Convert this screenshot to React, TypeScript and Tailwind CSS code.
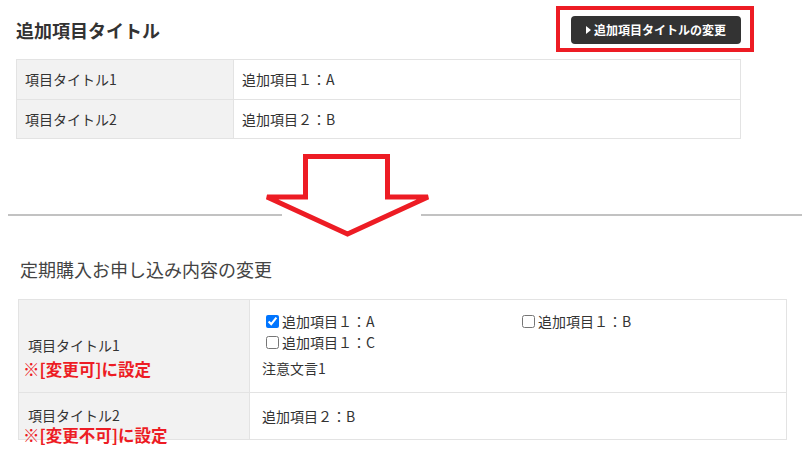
import React from 'react';

const font = { fontFamily: '"Noto Sans CJK JP", "Noto Sans", sans-serif' };

function Triangle() {
  return (
    <svg width="5" height="8" viewBox="0 0 5 8" className="mr-[3px]">
      <path d="M0 0 L5 4 L0 8 Z" fill="#fff" />
    </svg>
  );
}

function Arrow() {
  return (
    <svg
      className="absolute left-[255px] top-[150px]"
      width="185"
      height="95"
      viewBox="255 150 185 95"
    >
      <path
        d="M305.5 156.5 L387.5 156.5 L387.5 197 L428 197 L347.5 234 L267 197 L305.5 197 Z"
        fill="#fff"
        stroke="#ed1c24"
        strokeWidth="5"
        strokeLinejoin="miter"
      />
    </svg>
  );
}

function Check({ label, checked }: { label: string; checked?: boolean }) {
  return (
    <label className="flex items-center h-[21px]">
      <input
        type="checkbox"
        defaultChecked={checked}
        className="ml-1 mr-[3px] w-[13px] h-[13px]"
      />
      <span>{label}</span>
    </label>
  );
}

export default function App() {
  return (
    <div className="relative w-[812px] h-[460px] bg-white text-[#333] overflow-hidden" style={font}>
      {/* 追加項目タイトル */}
      <div className="px-4 pt-4 w-[757px]">
        <div className="flex items-center justify-between h-[28px]">
          <h2 className="text-[18px] font-bold leading-[28px]">追加項目タイトル</h2>
          <div className="relative">
            <button className="flex items-center h-[28px] w-[170px] justify-center bg-[#333] rounded-[4px] text-white text-[12px] font-bold">
              <Triangle />
              追加項目タイトルの変更
            </button>
            <span className="absolute -left-[15px] -right-[13px] -top-[10px] -bottom-[8px] border-4 border-[#ed1c24]" />
          </div>
        </div>

        <div className="mt-[15px] w-[725px] border border-[#e3e3e3] text-[14px]">
          <div className="flex h-[39px]">
            <div className="w-[217px] bg-[#f2f2f2] border-r border-[#e3e3e3] flex items-center pl-2">項目タイトル1</div>
            <div className="flex-1 flex items-center pl-2">追加項目１：A</div>
          </div>
          <div className="flex h-[39px] border-t border-[#e3e3e3]">
            <div className="w-[217px] bg-[#f2f2f2] border-r border-[#e3e3e3] flex items-center pl-2">項目タイトル2</div>
            <div className="flex-1 flex items-center pl-2">追加項目２：B</div>
          </div>
        </div>
      </div>

      {/* separator */}
      <div className="flex mt-[75px] pl-2 pr-[10px]">
        <div className="w-[274px] h-[2px] bg-[#c2c2c2]" />
        <div className="ml-auto w-[381px] h-[2px] bg-[#c2c2c2]" />
      </div>

      <Arrow />

      {/* 定期購入お申し込み内容の変更 */}
      <div className="pl-[18px]">
        <h2 className="mt-[40px] pl-[2px] text-[18px] leading-[26px] font-normal text-[#444]">定期購入お申し込み内容の変更</h2>

        <div className="mt-[17px] w-[769px] border border-[#e3e3e3] text-[14px]">
          <div className="flex h-[92px]">
            <div className="relative w-[231px] bg-[#f2f2f2] border-r border-[#e3e3e3] flex items-center pl-[9px] pb-[2px]">
              <span className="leading-[14px]">項目タイトル1</span>
              <span className="absolute left-[4px] top-[61px] text-[16.5px] leading-[16px] font-bold text-[#ed1c24] whitespace-nowrap">※[変更可]に設定</span>
            </div>
            <div className="flex-1 px-3 py-[11px]">
              <div className="grid grid-cols-2">
                <Check label="追加項目１：A" checked />
                <Check label="追加項目１：B" />
                <Check label="追加項目１：C" />
              </div>
              <p className="mt-[5px] leading-[21px]">注意文言1</p>
            </div>
          </div>
          <div className="flex h-[47px] border-t border-[#e3e3e3]">
            <div className="relative w-[231px] bg-[#f2f2f2] border-r border-[#e3e3e3] flex items-center pl-[9px] pb-[3px]">
              <span className="leading-[14px]">項目タイトル2</span>
              <span className="absolute left-[4px] top-[34px] text-[16.5px] leading-[16px] font-bold text-[#ed1c24] whitespace-nowrap">※[変更不可]に設定</span>
            </div>
            <div className="flex-1 flex items-center px-3">追加項目２：B</div>
          </div>
        </div>
      </div>
    </div>
  );
}
